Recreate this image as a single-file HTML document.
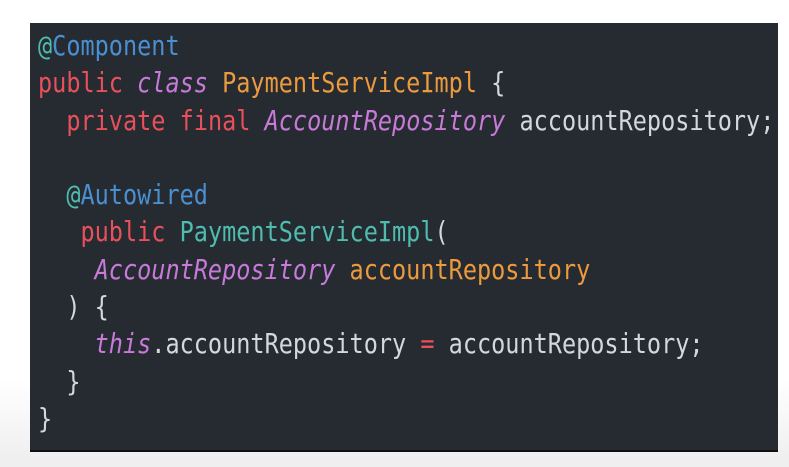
<!DOCTYPE html>
<html><head><style>
html,body{margin:0;padding:0;width:789px;height:467px;overflow:hidden;background:linear-gradient(#fff 0,#fff 380px,#efefef 460px);}
.p{position:absolute;left:30px;top:23px;width:748px;height:427px;background:#262a31;border-bottom:2px solid #111;}
pre{position:absolute;left:38px;top:27px;margin:0;font-family:"DejaVu Sans Mono","Liberation Mono",monospace;font-size:28px;line-height:37.3px;color:#d4d7dc;transform:scaleX(0.84);transform-origin:0 0;white-space:pre;}
.r{color:#e8505b}.i{color:#c77ad8;font-style:italic}.o{color:#eb9a3d}.t{color:#4fbcb0}.b{color:#4a8fd0}
</style></head><body>
<div class="p"></div>
<pre><span class="t">@</span><span class="b">Component</span>
<span class="r">public</span> <span class="i">class</span> <span class="o">PaymentServiceImpl</span> {
  <span class="r">private</span> <span class="r">final</span> <span class="i">AccountRepository</span> accountRepository;

  <span class="t">@</span><span class="b">Autowired</span>
   <span class="r">public</span> <span class="t">PaymentServiceImpl</span>(
    <span class="i">AccountRepository</span> <span class="o">accountRepository</span>
  ) {
    <span class="i">this</span>.accountRepository <span class="r">=</span> accountRepository;
  }
}</pre>
</body></html>
